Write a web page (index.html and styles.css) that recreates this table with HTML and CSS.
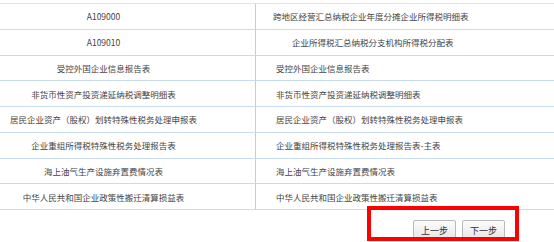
FILE: index.html
```html
<!DOCTYPE html>
<html lang="zh-CN">
<head>
    <meta charset="UTF-8">
    <meta name="viewport" content="width=device-width, initial-scale=1.0">
    <title>报表列表</title>
    <link rel="stylesheet" href="styles.css">
</head>
<body>
    <div class="report_list">
        <div class="row">
            <div class="code">A109000</div>
            <div class="name name_tight">跨地区经营汇总纳税企业年度分摊企业所得税明细表</div>
        </div>
        <div class="row">
            <div class="code">A109010</div>
            <div class="name name_indent">企业所得税汇总纳税分支机构所得税分配表</div>
        </div>
        <div class="row">
            <div class="code">受控外国企业信息报告表</div>
            <div class="name">受控外国企业信息报告表</div>
        </div>
        <div class="row">
            <div class="code">非货币性资产投资递延纳税调整明细表</div>
            <div class="name">非货币性资产投资递延纳税调整明细表</div>
        </div>
        <div class="row">
            <div class="code">居民企业资产（股权）划转特殊性税务处理申报表</div>
            <div class="name">居民企业资产（股权）划转特殊性税务处理申报表</div>
        </div>
        <div class="row">
            <div class="code">企业重组所得税特殊性税务处理报告表</div>
            <div class="name">企业重组所得税特殊性税务处理报告表-主表</div>
        </div>
        <div class="row">
            <div class="code">海上油气生产设施弃置费情况表</div>
            <div class="name">海上油气生产设施弃置费情况表</div>
        </div>
        <div class="row">
            <div class="code">中华人民共和国企业政策性搬迁清算损益表</div>
            <div class="name">中华人民共和国企业政策性搬迁清算损益表</div>
        </div>
    </div>

    <div class="steps">
        <button class="btn">上一步</button>
        <button class="btn">下一步</button>
    </div>

    <!-- 标注框 -->
    <div class="mark"></div>
</body>
</html>
```

FILE: styles.css
```css
* {margin: 0; padding: 0; box-sizing: border-box;}

body
{
    width: 554px;
    height: 242px;
    overflow: hidden;
    position: relative;
    background: #fff;
    font-family: "Noto Sans CJK SC", "Liberation Sans", sans-serif;
    color: #444;
}

.report_list
{
    margin-top: 3px;
    border-top: 1px solid #dbe7f4;
}

.report_list .row
{
    display: grid;
    grid-template-columns: 256px 1fr;
    height: 25.75px;
    border-bottom: 1px solid #c8dbf0;
    font-size: 8.5px;
}

.report_list .row div
{
    display: flex;
    align-items: center;
    white-space: nowrap;
}

.code
{
    justify-content: center;
    padding-right: 48px;
    border-right: 1px solid #b6d0ee;
}

.name
{
    padding-left: 20px;
}

.name_tight
{
    padding-left: 17px;
}

.name_indent
{
    padding-left: 36px;
}

.steps
{
    display: flex;
    justify-content: flex-end;
    gap: 6px;
    padding-right: 49px;
    margin-top: 10px;
}

.btn
{
    width: 43px;
    height: 21px;
    border: 1px solid #b9b9b9;
    border-radius: 2px;
    background: linear-gradient(#fdfdfd, #e4e4e4);
    font-family: "Noto Sans CJK SC", sans-serif;
    font-size: 9px;
    color: #333;
}

.mark
{
    position: absolute;
    left: 367px;
    top: 206px;
    width: 152px;
    height: 35px;
    border: 4px solid #f00;
}
```
